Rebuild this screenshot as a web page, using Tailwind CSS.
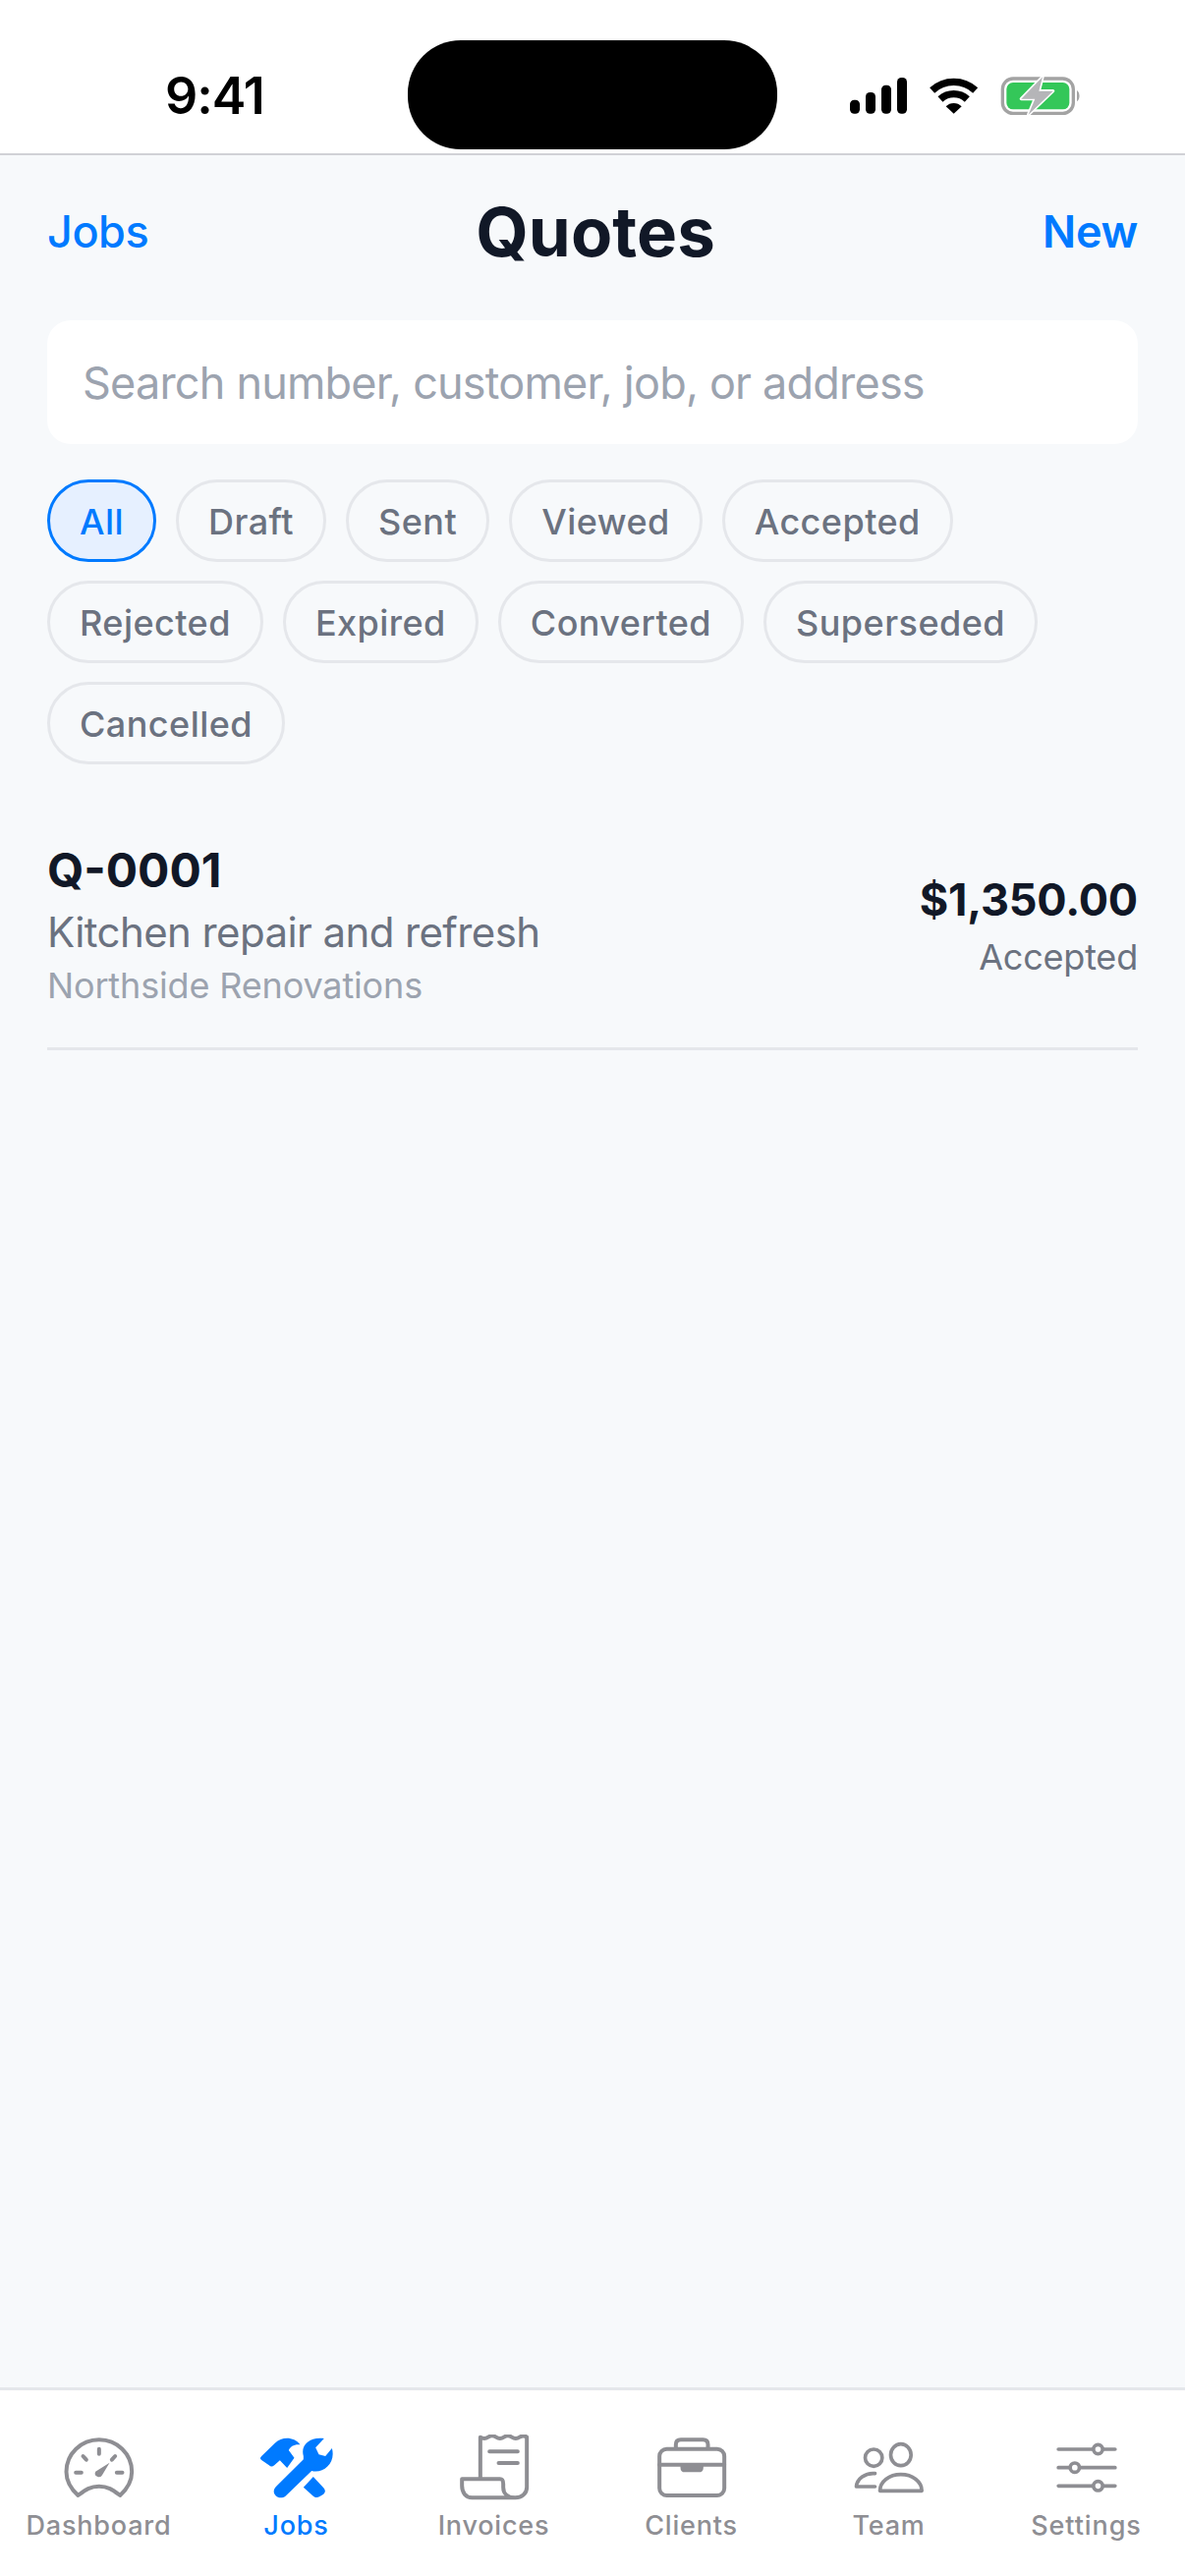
<!doctype html>
<html lang="en">
<head>
<meta charset="utf-8">
<title>Quotes</title>
<script src="https://cdn.jsdelivr.net/npm/@tailwindcss/browser@4"></script>
</head>
<body class="m-0">
<div class="w-[1206px] h-[2622px] overflow-hidden flex flex-col bg-[#f7f9fb] font-['Inter',sans-serif]">
  <header class="relative h-[158px] shrink-0 bg-white border-b-[2px] border-[#d1d1d6] flex justify-between items-start pl-[168px] pr-[86px]">
    <div class="mt-[68px] text-[52px] leading-[60px] font-semibold tracking-[-1px] text-black">9:41</div>
    <div class="absolute left-[415px] top-[41px] w-[376px] h-[111px] rounded-[54px] bg-black"></div>
    <svg class="mt-[50px]" width="300" height="80" viewBox="0 0 900 240">
      <rect x="135" y="155" width="30" height="42" rx="13" fill="#000"/>
      <rect x="183" y="132" width="30" height="65" rx="13" fill="#000"/>
      <rect x="231" y="110" width="30" height="87" rx="13" fill="#000"/>
      <rect x="279" y="87" width="30" height="110" rx="13" fill="#000"/>
      <path d="M386 126A97 97 0 0 1 518 126" fill="none" stroke="#000" stroke-width="22"/>
      <path d="M411 153A60 60 0 0 1 493 153" fill="none" stroke="#000" stroke-width="22"/>
      <path d="M452 197L428 175A33 33 0 0 1 476 175Z" fill="#000"/>
      <rect x="601" y="90" width="216" height="106" rx="32" fill="none" stroke="#a3a3a3" stroke-width="10"/>
      <rect x="613" y="102" width="192" height="82" rx="20" fill="#34c759"/>
      <path d="M828 126C838 132 838 154 828 160Z" fill="#a3a3a3"/>
      <path d="M723 85L658 152H700L680 200L755 128H712Z" fill="#b5b5b8" stroke="#fff" stroke-width="10" stroke-linejoin="round" paint-order="stroke"/>
    </svg>
  </header>

  <div class="flex items-center justify-between px-[48px] pt-[24px] h-[132px] shrink-0">
    <span class="text-[45px] leading-[60px] font-medium text-[#007aff] tracking-[-0.5px]">Jobs</span>
    <h1 class="text-[69px] leading-[84px] font-bold text-[#111827] tracking-[0.1px]">Quotes</h1>
    <span class="text-[45px] leading-[60px] font-semibold text-[#007aff] tracking-[-0.3px]">New</span>
  </div>

  <div class="mx-[48px] mt-[36px] h-[126px] shrink-0 rounded-[24px] bg-white flex items-center px-[36px] pt-[2px] text-[45px] tracking-[-0.8px] text-[#9ca3af]">Search number, customer, job, or address</div>

  <div class="flex flex-wrap gap-x-[20px] gap-y-[19px] px-[48px] mt-[36px]">
    <span class="h-[84px] flex items-center px-[30px] pt-[2px] rounded-full border-[3px] border-[#007aff] bg-[#e6f0ff] text-[36px] font-medium tracking-[0.45px] text-[#007aff]">All</span>
    <span class="h-[84px] flex items-center px-[30px] pt-[2px] rounded-full border-[3px] border-[#e5e7eb] text-[36px] font-medium tracking-[0.45px] text-[#6b7280]">Draft</span>
    <span class="h-[84px] flex items-center px-[30px] pt-[2px] rounded-full border-[3px] border-[#e5e7eb] text-[36px] font-medium tracking-[0.45px] text-[#6b7280]">Sent</span>
    <span class="h-[84px] flex items-center px-[30px] pt-[2px] rounded-full border-[3px] border-[#e5e7eb] text-[36px] font-medium tracking-[0.45px] text-[#6b7280]">Viewed</span>
    <span class="h-[84px] flex items-center px-[30px] pt-[2px] rounded-full border-[3px] border-[#e5e7eb] text-[36px] font-medium tracking-[0.45px] text-[#6b7280]">Accepted</span>
    <span class="h-[84px] flex items-center px-[30px] pt-[2px] rounded-full border-[3px] border-[#e5e7eb] text-[36px] font-medium tracking-[0.45px] text-[#6b7280]">Rejected</span>
    <span class="h-[84px] flex items-center px-[30px] pt-[2px] rounded-full border-[3px] border-[#e5e7eb] text-[36px] font-medium tracking-[0.45px] text-[#6b7280]">Expired</span>
    <span class="h-[84px] flex items-center px-[30px] pt-[2px] rounded-full border-[3px] border-[#e5e7eb] text-[36px] font-medium tracking-[0.45px] text-[#6b7280]">Converted</span>
    <span class="h-[84px] flex items-center px-[30px] pt-[2px] rounded-full border-[3px] border-[#e5e7eb] text-[36px] font-medium tracking-[0.45px] text-[#6b7280]">Superseded</span>
    <span class="h-[84px] flex items-center px-[30px] pt-[2px] rounded-full border-[3px] border-[#e5e7eb] text-[36px] font-medium tracking-[0.45px] text-[#6b7280]">Cancelled</span>
  </div>

  <div class="mx-[48px] mt-[81px] pb-[42px] border-b-[3px] border-[#e5e7eb] flex items-center justify-between">
    <div class="flex flex-col">
      <span class="text-[48px] leading-[54px] font-bold text-[#111827]">Q-0001</span>
      <span class="mt-[12px] text-[42px] leading-[48px] tracking-[-0.6px] text-[#6b7280]">Kitchen repair and refresh</span>
      <span class="mt-[9px] text-[36px] leading-[42px] tracking-[-0.15px] text-[#9ca3af]">Northside Renovations</span>
    </div>
    <div class="flex flex-col items-end">
      <span class="text-[45px] leading-[54px] font-bold tracking-[-0.2px] text-[#111827]">$1,350.00</span>
      <span class="mt-[10px] text-[36px] leading-[42px] tracking-[-0.2px] text-[#6b7280]">Accepted</span>
    </div>
  </div>

  <nav class="mt-auto h-[192px] shrink-0 bg-white border-t-[3px] border-[#e5e7eb] grid grid-cols-6 pt-[45px]">
    <div class="flex flex-col items-center">
      <svg width="80" height="72" viewBox="181.5 174 240 216" fill="none" stroke="#8e8e93" stroke-width="12" stroke-linecap="round" stroke-linejoin="round">
        <path d="M237 360C215 340 201 318 201 288C201 233 246 190 301 190C356 190 401 233 401 288C401 318 387 340 365 360C345 345 330 332 301 332C272 332 257 345 237 360Z"/>
        <path d="M301 218V233M252 240L262 251M350 240L340 251M230 290H247M355 290H372"/>
        <path d="M333 260L311 297A11 11 0 0 1 290 287Z" fill="#8e8e93" stroke="none"/>
      </svg>
      <span class="mt-[3px] text-[27px] leading-[36px] font-medium tracking-[0.8px] text-[#8e8e93]">Dashboard</span>
    </div>
    <div class="flex flex-col items-center">
      <svg width="80" height="72" viewBox="784.5 174 240 216" fill="#007aff">
        <path d="M925 240C915 205 945 180 988 186L962 214L972 235L992 240L1012 216C1025 260 985 295 950 285L870 362C860 370 845 368 838 358C832 350 834 340 842 332L925 250Z"/>
        <path d="M797 240L838 200C860 180 895 180 915 205C897 203 885 210 880 222L897 245L875 276L853 253L836 268C830 273 825 273 820 268L797 252C792 248 792 245 797 240Z"/>
        <path d="M925 335L955 303L985 335C993 343 993 350 985 357L975 363C968 368 960 367 955 362Z"/>
      </svg>
      <span class="mt-[3px] text-[27px] leading-[36px] font-medium tracking-[0.8px] text-[#007aff]">Jobs</span>
    </div>
    <div class="flex flex-col items-center">
      <svg width="80" height="72" viewBox="187.5 174 240 216" fill="none" stroke="#8e8e93" stroke-width="12" stroke-linecap="round" stroke-linejoin="round">
        <path d="M265 305V182Q277 190 289 182T313 182T337 182T361 182T385 182T407 182V335C407 355 390 367 372 367H240C220 367 209 350 209 330V310H325C333 310 335 315 335 325V335C335 355 350 367 372 367"/>
        <path d="M293 226H379M321 261H379"/>
      </svg>
      <span class="mt-[3px] text-[27px] leading-[36px] font-medium tracking-[0.8px] text-[#8e8e93]">Invoices</span>
    </div>
    <div class="flex flex-col items-center">
      <svg width="80" height="72" viewBox="790.5 174 240 216" fill="none" stroke="#8e8e93" stroke-width="12" stroke-linecap="round" stroke-linejoin="round">
        <rect x="812" y="218" width="198" height="142" rx="22"/>
        <path d="M862 215V205Q862 190 877 190H945Q960 190 960 205V215M812 266H1010"/>
        <path d="M876 270H946V275Q946 289 932 289H890Q876 289 876 275Z" fill="#8e8e93" stroke="none"/>
      </svg>
      <span class="mt-[3px] text-[27px] leading-[36px] font-medium tracking-[0.8px] text-[#8e8e93]">Clients</span>
    </div>
    <div class="flex flex-col items-center">
      <svg width="80" height="72" viewBox="193.5 174 240 216" fill="none" stroke="#8e8e93" stroke-width="11" stroke-linecap="round" stroke-linejoin="round">
        <circle cx="266" cy="245" r="26"/>
        <ellipse cx="349" cy="236" rx="31" ry="33"/>
        <path d="M285 346H413C413 318 385 296 349 296C313 296 285 318 285 346Z"/>
        <path d="M270 293C240 290 215 310 213 333H270"/>
      </svg>
      <span class="mt-[3px] text-[27px] leading-[36px] font-medium tracking-[0.8px] text-[#8e8e93]">Team</span>
    </div>
    <div class="flex flex-col items-center">
      <svg width="80" height="72" viewBox="796.5 174 240 216" fill="none" stroke="#8e8e93" stroke-width="11" stroke-linecap="round">
        <path d="M830 219H1003M830 275H1003M830 331H1003"/>
        <circle cx="951" cy="219" r="14" fill="#fff"/>
        <circle cx="880" cy="275" r="14" fill="#fff"/>
        <circle cx="951" cy="331" r="14" fill="#fff"/>
      </svg>
      <span class="mt-[3px] text-[27px] leading-[36px] font-medium tracking-[0.9px] text-[#8e8e93]">Settings</span>
    </div>
  </nav>
</div>
</body>
</html>
